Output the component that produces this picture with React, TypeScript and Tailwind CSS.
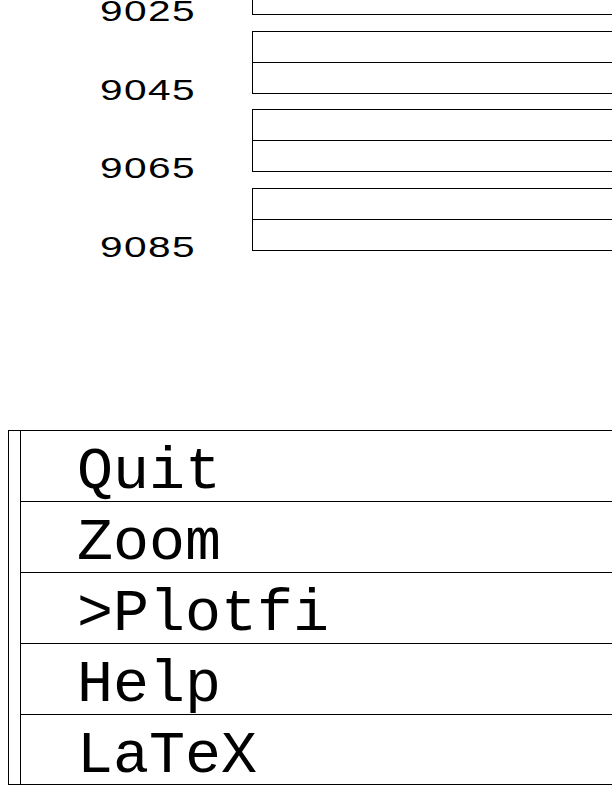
import React from "react";

const marks = ["9025", "9045", "9065", "9085"];
const menu = ["Quit", "Zoom", ">Plotfi", "Help", "LaTeX"];

function Mark({ label }: { label: string }) {
  return (
    <div className="flex h-[78.5px]">
      <div className="w-[252px] shrink-0">
        <div className="mt-[45px] ml-[100px] origin-left scale-x-[1.4] text-[29px] leading-[29px] tracking-[1px] text-black [font-family:'Liberation_Sans',Arial,sans-serif]">
          {label}
        </div>
      </div>
      <div className="flex h-[63px] w-[420px] shrink-0 flex-col border-y border-l border-black">
        <div className="h-[31px] border-b border-black" />
        <div className="flex-1" />
      </div>
    </div>
  );
}

export default function App() {
  return (
    <div className="h-[792px] w-[612px] overflow-hidden bg-white">
      <div className="-mt-[48px]">
        {marks.map((m) => (
          <Mark key={m} label={m} />
        ))}
      </div>
      <div className="ml-[8px] mt-[164px] w-[640px] border-y border-l border-black pl-[11px]">
        <div className="border-l border-black">
          {menu.map((item, i) => (
            <div
              key={item}
              className={
                i < menu.length - 1
                  ? "h-[71px] border-b border-black pl-[56px] pt-[11px] text-[60px] leading-[60px] text-black [font-family:'Liberation_Mono','Courier_New',monospace]"
                  : "h-[69px] pl-[56px] pt-[11px] text-[60px] leading-[60px] text-black [font-family:'Liberation_Mono','Courier_New',monospace]"
              }
            >
              {item}
            </div>
          ))}
        </div>
      </div>
    </div>
  );
}
